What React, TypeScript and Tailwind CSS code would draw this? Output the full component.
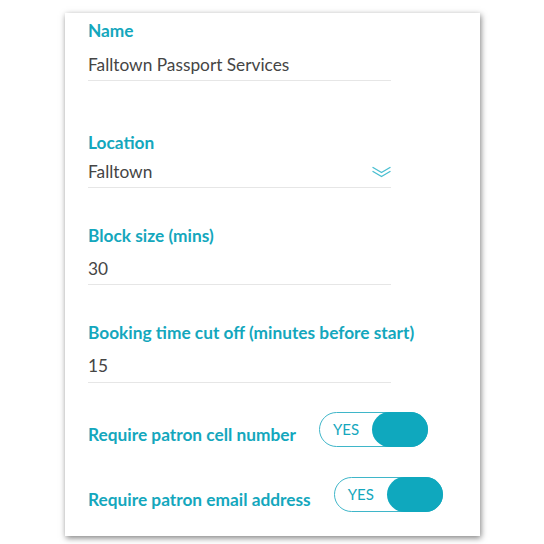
import React from "react";

const teal = "text-[#14a7bd]";

function Toggle() {
  return (
    <div className="relative flex h-[35px] w-[109px] shrink-0 items-center rounded-full border border-[#3fb6c9] bg-white">
      <span className="pl-[13px] text-[15px] leading-none text-[#14a7bd]">YES</span>
      <div className="absolute right-[-1px] top-[-1px] h-[35px] w-[56px] rounded-full bg-[#0fa8be]" />
    </div>
  );
}

function Chevrons() {
  return (
    <svg width="19" height="12" viewBox="0 0 19 12" fill="none" stroke="#49bfd1" strokeWidth="1.4" strokeLinecap="round" strokeLinejoin="round">
      <path d="M1 1.5 L9.5 6.5 L18 1.5" />
      <path d="M1 5.5 L9.5 10.5 L18 5.5" />
    </svg>
  );
}

export default function App() {
  return (
    <div
      className="h-[544px] w-[544px] bg-white pl-[65px] pt-[13px]"
      style={{ fontFamily: "Lato, 'Open Sans', sans-serif" }}
    >
      <div className="h-[523px] w-[415px] bg-white pl-[23px] pt-[8px] shadow-[1px_2px_6px_rgba(0,0,0,0.5)]">
        {/* Name */}
        <div className="w-[303px]">
          <div className={`text-[17.3px] font-bold leading-[20px] ${teal}`}>Name</div>
          <div className="mt-[14px] border-b border-[#e6e6e6] pb-[5px] text-[17.3px] leading-[20px] text-[#454545]">
            Falltown Passport Services
          </div>
        </div>
        {/* Location */}
        <div className="mt-[52px] w-[303px]">
          <div className={`text-[17.3px] font-bold leading-[20px] ${teal}`}>Location</div>
          <div className="mt-[9px] flex items-center justify-between border-b border-[#e6e6e6] pb-[5px] text-[17.3px] leading-[20px] text-[#454545]">
            <span>Falltown</span>
            <Chevrons />
          </div>
        </div>
        {/* Block size */}
        <div className="mt-[38px] w-[303px]">
          <div className={`text-[17.3px] font-bold leading-[20px] ${teal}`}>Block size (mins)</div>
          <div className="mt-[13px] border-b border-[#e6e6e6] pb-[5px] text-[17.3px] leading-[20px] text-[#454545]">
            30
          </div>
        </div>
        {/* Booking */}
        <div className="mt-[38px] w-[303px]">
          <div className={`whitespace-nowrap text-[17.3px] font-bold leading-[20px] ${teal}`}>
            Booking time cut off (minutes before start)
          </div>
          <div className="mt-[13px] border-b border-[#e6e6e6] pb-[6px] text-[17.3px] leading-[20px] text-[#454545]">
            15
          </div>
        </div>
        {/* Toggles */}
        <div className="mt-[29px] flex items-start">
          <div className={`mt-[13px] text-[17.3px] font-bold leading-[20px] ${teal}`}>Require patron cell number</div>
          <div className="ml-[23px]">
            <Toggle />
          </div>
        </div>
        <div className="mt-[30px] flex items-start">
          <div className={`mt-[13px] text-[17.3px] font-bold leading-[20px] ${teal}`}>Require patron email address</div>
          <div className="ml-[23px]">
            <Toggle />
          </div>
        </div>
      </div>
    </div>
  );
}
